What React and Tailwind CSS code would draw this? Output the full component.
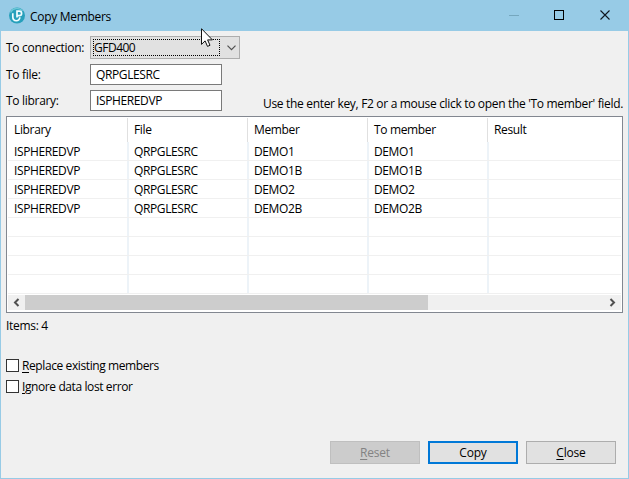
import React from "react";

const rows = [
  ["ISPHEREDVP", "QRPGLESRC", "DEMO1", "DEMO1"],
  ["ISPHEREDVP", "QRPGLESRC", "DEMO1B", "DEMO1B"],
  ["ISPHEREDVP", "QRPGLESRC", "DEMO2", "DEMO2"],
  ["ISPHEREDVP", "QRPGLESRC", "DEMO2B", "DEMO2B"],
  ["", "", "", ""],
  ["", "", "", ""],
  ["", "", "", ""],
  ["", "", "", ""],
];

function TitleBar() {
  return (
    <header className="flex h-[31px] shrink-0 items-center bg-[#97cbe6] pl-[7px]">
      <svg width="18" height="18" viewBox="0 0 18 18" className="shrink-0">
        <circle cx="9" cy="8.5" r="8" fill="#27a0bb" />
        <path d="M2.5 5.5a7.3 7.3 0 0 1 12-1.500" stroke="#6cc6d6" strokeWidth="1.6" fill="none" />
        <path d="M4.8 6.200v3.600c0 5.200 7 5.200 7 .4M9 10.500V4.200h2.200c3.200 0 3.200 4.400 0 4.400H9" stroke="#f2fcff" strokeWidth="1.7" fill="none" />
      </svg>
      <h1 className="ml-[4px] grow pt-[2px] text-[12px] tracking-[-0.3px]">Copy Members</h1>
      <div className="flex w-[137px] shrink-0 items-center">
        <svg width="137" height="31" viewBox="0 0 137 31" fill="none" shapeRendering="crispEdges">
          <path d="M18 15.5h10" stroke="#75a7be" />
          <rect x="63.5" y="10.5" width="9" height="9" stroke="#000" />
          <path d="M109.500 10.500l9 9M118.500 10.500l-9 9" stroke="#101820" strokeWidth="1.1" shapeRendering="auto" />
        </svg>
      </div>
    </header>
  );
}

function Field({ label, value }) {
  return (
    <div className="flex h-[21px] items-center">
      <label className="w-[84px] pt-px tracking-[-0.3px]">{label}</label>
      <div className="flex h-[21px] w-[132px] items-center border border-[#7a7a7a] bg-white pl-[5px] tracking-[-0.38px]">{value}</div>
    </div>
  );
}

function MembersTable() {
  return (
    <section className="mt-[5px] h-[197px] w-[617px] border border-[#828790] bg-white p-px">
      <div className="flex h-[24px]">
        {["Library", "File", "Member", "To member"].map((h) => (
          <div key={h} className="flex w-[120px] items-center border-r border-[#e0e0e0] pl-[6px]">{h}</div>
        ))}
        <div className="flex items-center pl-[6px]">Result</div>
      </div>
      {rows.map((row, r) => (
        <div key={r} className="flex h-[19px] border-b border-[#f0f0f0]">
          {row.map((c, i) => (
            <div key={i} className={`flex h-[18px] items-center border-r-2 border-[#edf3f8] pt-[2px] tracking-[-0.38px] ${i ? "w-[120px] pl-[5px]" : "w-[121px] pl-[6px]"}`}>{c}</div>
          ))}
        </div>
      ))}
      <div className="mt-px flex h-[15px] items-center bg-[#f0f0f0]">
        <svg width="17" height="15" viewBox="0 0 17 15" fill="none" stroke="#505050" strokeWidth="2">
          <path d="M10.5 4L7 7.5l3.5 3.5" />
        </svg>
        <div className="h-full w-[403px] bg-[#cdcdcd]" />
        <div className="grow" />
        <svg width="17" height="15" viewBox="0 0 17 15" fill="none" stroke="#505050" strokeWidth="2">
          <path d="M6.5 4L10 7.5 6.5 11" />
        </svg>
      </div>
    </section>
  );
}

function Check({ first, rest }) {
  return (
    <label className="flex h-[21px] items-center">
      <span className="mr-[3px] h-[13px] w-[13px] border border-[#333] bg-white" />
      <span className="tracking-[-0.4px]"><span className="underline underline-offset-2">{first}</span>{rest}</span>
    </label>
  );
}

export default function App() {
  return (
    <main className="relative flex h-[479px] w-[629px] flex-col overflow-hidden border border-t-0 border-[#97cbe6] bg-[#f0f0f0] font-['Open_Sans','Noto_Sans',sans-serif] text-[12px] leading-[16px] tracking-[-0.35px] whitespace-nowrap text-black">
      <TitleBar />
      <div className="flex grow flex-col pt-[5px] pl-[5px]">
        <div className="flex h-[75px] items-end">
          <div className="flex h-[75px] w-[234px] flex-col gap-[5px]">
            <div className="flex h-[23px] items-center">
              <label className="w-[84px] pt-px tracking-[-0.28px]">To connection:</label>
              <div className="flex h-[23px] w-[150px] items-center border border-[#adadad] bg-[#e1e1e1] pl-[2px]">
                <div className="flex h-[17px] w-[127px] items-center border border-dotted border-black tracking-[-0.5px]">GFD400</div>
                <svg width="9" height="6" viewBox="0 0 9 6" fill="none" stroke="#505050" strokeWidth="1.2" className="ml-[7px]">
                  <path d="M.5 .7l4 4 4-4" />
                </svg>
              </div>
            </div>
            <Field label="To file:" value="QRPGLESRC" />
            <Field label="To library:" value="ISPHEREDVP" />
          </div>
          <p className="mt-px ml-[23px] translate-y-px tracking-[-0.32px]">Use the enter key, F2 or a mouse click to open the 'To member' field.</p>
        </div>
        <MembersTable />
        <p className="mt-[5px] tracking-[-0.3px]">Items: 4</p>
        <div className="mt-[21px]">
          <Check first="R" rest="eplace existing members" />
          <Check first="I" rest="gnore data lost error" />
        </div>
        <div className="mt-[44px] flex justify-end gap-2 pr-[12px] tracking-[-0.2px]">
          <button className="h-[23px] w-[90px] border border-[#bfbfbf] bg-[#cccccc] text-[#838383]"><span className="underline underline-offset-2">R</span>eset</button>
          <button className="h-[23px] w-[90px] border-2 border-[#0078d7] bg-[#e1e1e1] leading-[18px]">Copy</button>
          <button className="h-[23px] w-[90px] border border-[#adadad] bg-[#e1e1e1]"><span className="underline underline-offset-2">C</span>lose</button>
        </div>
      </div>
      <svg className="absolute top-[28px] left-[200px]" width="13" height="20" viewBox="0 0 13 20">
        <path d="M.5.7v15.7l3.6-3.5 2.4 5.5 2.5-1.1-2.4-5.4h4.8z" fill="#fff" stroke="#111" strokeWidth="1" />
      </svg>
    </main>
  );
}
